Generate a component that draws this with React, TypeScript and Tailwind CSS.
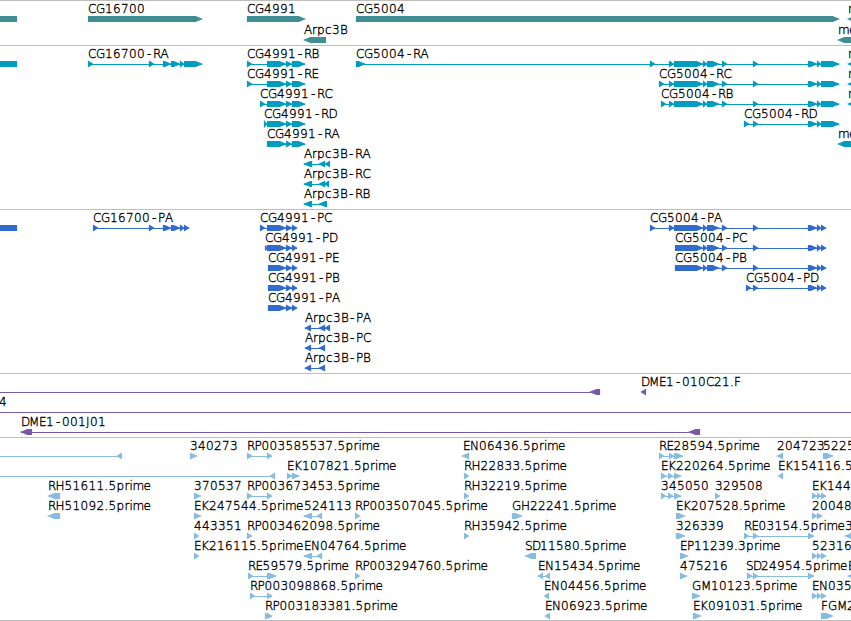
type Block = [number, number];

type Feature = {
  label?: string;
  x?: number;
  blocks: Block[];
  reverse?: boolean;
  plain?: boolean;
  line?: Block;
};

type TrackData = {
  name: string;
  color: string;
  pitch: number;
  className: string;
  rows: Feature[][];
};

const fwd = (label: string, ...blocks: Block[]): Feature => ({ label, blocks });
const rev = (label: string, ...blocks: Block[]): Feature => ({ label, blocks, reverse: true });
const bar = (...blocks: Block[]): Feature => ({ blocks, plain: true });

const CG4991_R: Block[] = [[267, 286], [286, 292], [292, 305]];
const CG4991_P: Block[] = [[286, 292], [292, 297]];
const CG5004_MID: Block[] = [[703, 707], [707, 719], [722, 727], [753, 758]];
const CG5004_R: Block[] = [[669, 674], [674, 703], ...CG5004_MID, [808, 817], [817, 821], [821, 839]];
const CG5004_P: Block[] = [...CG5004_MID, [808, 817], [817, 821], [821, 826]];

const tracks: TrackData[] = [
  {
    name: "genes",
    color: "#408e94",
    pitch: 21,
    className: "h-[45px]",
    rows: [
      [
        bar([0, 17]),
        fwd("CG16700", [88, 202]),
        fwd("CG4991", [247, 305]),
        fwd("CG5004", [356, 839]),
        rev("m", [848, 870]),
      ],
      [rev("Arpc3B", [304, 326]), rev("me", [838, 870])],
    ],
  },
  {
    name: "transcripts",
    color: "#009dbf",
    pitch: 20,
    className: "h-[164px]",
    rows: [
      [
        bar([0, 17]),
        fwd("CG16700-RA", [88, 93], [149, 154], [163, 171], [171, 180], [180, 184], [184, 202]),
        fwd("CG4991-RB", [247, 252], ...CG4991_R),
        fwd("CG5004-RA", [356, 365], [650, 655], ...CG5004_R),
        rev("m", [848, 870]),
      ],
      [
        fwd("CG4991-RE", [247, 252], ...CG4991_R),
        fwd("CG5004-RC", [659, 664], ...CG5004_R),
        rev("m", [848, 870]),
      ],
      [
        fwd("CG4991-RC", [260, 265], ...CG4991_R),
        fwd("CG5004-RB", [661, 666], ...CG5004_R),
        rev("m", [848, 870]),
      ],
      [
        fwd("CG4991-RD", [264, 267], ...CG4991_R),
        fwd("CG5004-RD", [744, 749], [753, 758], [808, 817], [817, 821], [821, 839]),
      ],
      [fwd("CG4991-RA", ...CG4991_R), rev("me", [838, 870])],
      [rev("Arpc3B-RA", [304, 312], [319, 325], [325, 330])],
      [rev("Arpc3B-RC", [304, 312], [319, 325], [324, 329])],
      [rev("Arpc3B-RB", [304, 312], [319, 327])],
    ],
  },
  {
    name: "proteins",
    color: "#306bcd",
    pitch: 20,
    className: "h-[164px]",
    rows: [
      [
        bar([0, 17]),
        fwd("CG16700-PA", [93, 98], [149, 154], [163, 171], [171, 180], [180, 184], [184, 189]),
        fwd("CG4991-PC", [260, 265], [267, 286], ...CG4991_P),
        fwd("CG5004-PA", [650, 655], [669, 674], [674, 703], ...CG5004_P),
      ],
      [fwd("CG4991-PD", [265, 267], [267, 286], ...CG4991_P), fwd("CG5004-PC", [675, 703], ...CG5004_P)],
      [fwd("CG4991-PE", [268, 286], ...CG4991_P), fwd("CG5004-PB", [675, 703], ...CG5004_P)],
      [
        fwd("CG4991-PB", [268, 286], ...CG4991_P),
        fwd("CG5004-PD", [746, 751], [753, 758], [808, 817], [817, 821], [821, 826]),
      ],
      [fwd("CG4991-PA", [268, 286], ...CG4991_P)],
      [rev("Arpc3B-PA", [305, 311], [319, 325], [325, 330])],
      [rev("Arpc3B-PC", [305, 311], [319, 325])],
      [rev("Arpc3B-PB", [305, 311], [319, 325])],
    ],
  },
  {
    name: "bacs",
    color: "#7859a9",
    pitch: 20,
    className: "h-16",
    rows: [
      [{ blocks: [[590, 600]], reverse: true, line: [0, 600] }, rev("DME1-010C21.F", [641, 646])],
      [{ label: "4", x: -1, blocks: [], line: [0, 851] }],
      [rev("DME1-001J01", [21, 32], [689, 700])],
    ],
  },
  {
    name: "ests",
    color: "#88bcde",
    pitch: 20,
    className: "h-[183px]",
    rows: [
      [
        { blocks: [[117, 122]], reverse: true, line: [0, 122] },
        fwd("340273", [190, 197]),
        fwd("RP003585537.5prime", [247, 252], [267, 272]),
        { label: "EN06436.5prime", x: 463, blocks: [[462, 469]], reverse: true },
        fwd("RE28594.5prime", [659, 664], [669, 674], [674, 683]),
        rev("204723", [777, 783]),
        fwd("5225", [823, 833]),
      ],
      [
        { blocks: [[270, 275]], reverse: true, line: [0, 275] },
        fwd("EK107821.5prime", [287, 292], [292, 299]),
        fwd("RH22833.5prime", [464, 469]),
        fwd("EK220264.5prime", [661, 666], [668, 673], [674, 681]),
        rev("EK154116.5", [778, 783]),
      ],
      [
        rev("RH51611.5prime", [48, 60]),
        fwd("370537", [194, 201]),
        fwd("RP003673453.5prime", [247, 252], [267, 272]),
        fwd("RH32219.5prime", [464, 469]),
        fwd("345050", [661, 666], [668, 673], [674, 681]),
        fwd("329508", [715, 720]),
        fwd("EK144", [812, 817], [817, 821], [821, 826]),
      ],
      [
        rev("RH51092.5prime", [48, 60]),
        fwd("EK247544.5prime", [194, 201]),
        rev("524113", [304, 312], [317, 322]),
        fwd("RP003507045.5prime", [355, 360]),
        fwd("GH22241.5prime", [512, 522]),
        fwd("EK207528.5prime", [676, 685]),
        fwd("20048", [812, 817], [817, 822]),
      ],
      [
        fwd("443351", [194, 199]),
        fwd("RP003462098.5prime", [247, 252]),
        fwd("RH35942.5prime", [464, 469]),
        fwd("326339", [676, 685]),
        fwd("RE03154.5prime", [744, 749], [753, 758], [808, 814]),
        rev("3", [845, 856]),
      ],
      [
        fwd("EK216115.5prime", [194, 199]),
        rev("EN04764.5prime", [304, 312], [317, 322]),
        rev("SD11580.5prime", [525, 536]),
        fwd("EP11239.3prime", [680, 688]),
        fwd("52316", [812, 817], [817, 821], [821, 826]),
      ],
      [
        fwd("RE59579.5prime", [248, 253], [267, 276]),
        fwd("RP003294760.5prime", [355, 360]),
        rev("EN15434.5prime", [538, 543], [545, 550]),
        fwd("475216", [680, 687]),
        { label: "SD24954.5prime", x: 746, blocks: [[747, 752], [753, 758], [808, 814]] },
        rev("E", [848, 858]),
      ],
      [
        fwd("RP003098868.5prime", [250, 255], [267, 272]),
        rev("EN04456.5prime", [544, 549]),
        fwd("GM10123.5prime", [692, 700]),
        fwd("EN035", [812, 817], [817, 821], [821, 826]),
      ],
      [
        fwd("RP003183381.5prime", [265, 268], [267, 272]),
        rev("EN06923.5prime", [545, 550]),
        fwd("EK091031.5prime", [693, 701]),
        fwd("FGM2", [821, 833]),
      ],
    ],
  },
];

// label advances in pixels, every other character is 8 wide
const ADVANCE: Record<string, number> = {
  B: 7, E: 7, F: 7, G: 9, H: 9, J: 4, M: 10, N: 9, P: 7, R: 7.5, S: 7,
  c: 7, e: 7, i: 3, m: 11, r: 5, ".": 4,
};

function charPositions(label: string, start: number) {
  let x = start;
  return Array.from(label, (char) => {
    const at = char === "-" ? x + 2 : x;
    x += ADVANCE[char] ?? 8;
    return at;
  }).join(" ");
}

function blockPath([start, end]: Block, reverse?: boolean, plain?: boolean) {
  const a = start + 0.5;
  const b = end - 0.5;
  if (plain) return `M${a} .5H${b}V5.5H${a}Z`;
  const head = Math.min(b - a, 6);
  if (reverse) return `M${b} .5H${a + head}L${a} 3L${a + head} 5.5H${b}Z`;
  return `M${a} .5H${b - head}L${b} 3L${b - head} 5.5H${a}Z`;
}

function FeatureGlyph({ feature, color }: { feature: Feature; color: string }) {
  const { label, blocks, reverse, plain } = feature;
  const x = feature.x ?? blocks[0]?.[0] ?? 0;
  const [from, to] = feature.line ?? [blocks[0][0], blocks[blocks.length - 1][1]];

  return (
    <g>
      <g transform="translate(0 14)" fill={color}>
        {(blocks.length > 1 || feature.line) && <rect x={from} y={3} width={to - from} height={1} />}
        {blocks.map((block) => (
          <path key={block[0]} d={blockPath(block, reverse, plain)} stroke={color} strokeWidth={1.2} />
        ))}
      </g>
      {label && (
        <text x={charPositions(label, x)} y={11} stroke="black" strokeWidth={0.35}>
          {label}
        </text>
      )}
    </g>
  );
}

function Track({ track }: { track: TrackData }) {
  return (
    <section className={`border-t border-[#bebebe] pt-px ${track.className}`}>
      {track.rows.map((row, index) => (
        <svg key={index} width={851} height={track.pitch} className="block overflow-visible">
          {row.map((feature, i) => (
            <FeatureGlyph key={i} feature={feature} color={track.color} />
          ))}
        </svg>
      ))}
    </section>
  );
}

export default function App() {
  return (
    <main className="h-[621px] w-[851px] overflow-hidden border-b border-[#bebebe] bg-white font-['DejaVu_Sans',sans-serif] text-[12px] font-extralight text-black">
      {tracks.map((track) => (
        <Track key={track.name} track={track} />
      ))}
    </main>
  );
}
